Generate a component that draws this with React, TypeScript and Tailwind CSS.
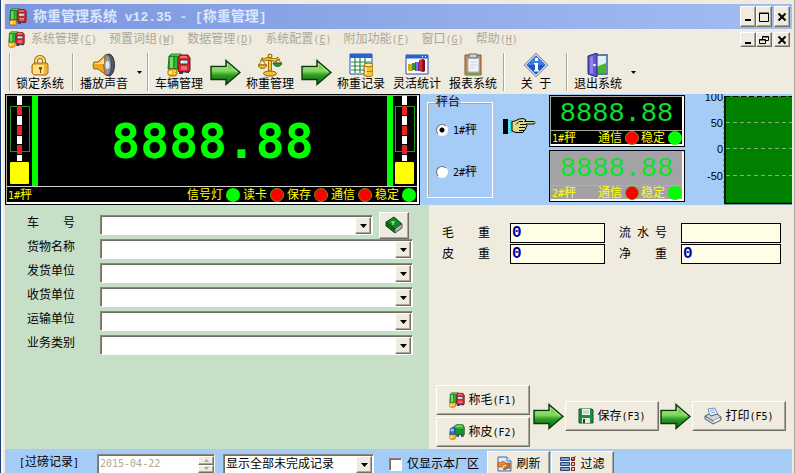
import React from "react";

const RAISED =
  "border border-t-white border-l-white border-r-[#716f64] border-b-[#716f64] shadow-[inset_-1px_-1px_0_#aca899] bg-[#efebde]";
const SUNKEN =
  "border border-t-[#8a8779] border-l-[#8a8779] border-r-white border-b-white shadow-[inset_1px_1px_0_#716f64] bg-white";

type IconProps = { className?: string };

function Latin({ children }: { children: React.ReactNode }) {
  return <span className="font-['DejaVu_Sans_Mono',monospace] text-[10px]">{children}</span>;
}

function TruckIcon({ className = "size-6" }: IconProps) {
  return (
    <svg viewBox="0 0 24 24" className={className} aria-hidden="true">
      <path d="M4 1h10l-1 3H2z" fill="#8cf06a" stroke="#14541a" strokeWidth=".8" />
      <path d="M2 3h11v13H1z" fill="#1f9e2c" stroke="#0d5a18" strokeWidth=".8" />
      <path d="M4.500 4v11" stroke="#6fe05c" strokeWidth="3" />
      <path d="M9 4v11" stroke="#35b83a" strokeWidth="2" />
      <path d="M11 5 13 2h8l2 3v12l-1 2H12l-1-2z" fill="#d62630" stroke="#7c0f18" />
      <path d="M13 4h7" stroke="#ff8a80" strokeWidth="1.500" />
      <path d="M13 7h8v4h-8z" fill="#c9def0" stroke="#4b1720" strokeWidth=".8" />
      <path d="M14 8h3l-2 2h-1z" fill="#fff" />
      <path d="M14 14h6M14 16h6" stroke="#ffb3a0" />
      <path d="M12 18h4v3h-4zM19 18h3v2h-3z" fill="#243a73" />
      <path d="M1 17.500 3 16h5l2 1.500v4L8 23H3l-2-1.500z" fill="#f3b31f" stroke="#a15d08" strokeWidth=".9" />
      <path d="M2 18.500h2.500v2H2zM6 18h3M6 20.500h2" fill="#fff0a0" stroke="#fff0a0" strokeWidth=".8" />
    </svg>
  );
}

function EmptyTruckIcon({ className = "size-6" }: IconProps) {
  return (
    <svg viewBox="0 0 24 24" className={className} aria-hidden="true">
      <path d="M6 5 11 1h10l2 4v11H8z" fill="#1b9430" stroke="#0c5417" />
      <path d="m8 5 4-3h8l1 3z" fill="#6ddd5c" />
      <path d="M11 6h11" stroke="#47bd48" strokeWidth="1.500" />
      <path d="m2 7 5-2 2 3v8H1z" fill="#2d6bd6" stroke="#123a8c" />
      <path d="m3 8 4-1v4H2z" fill="#a9d2fa" />
      <path d="M11 16h4v3h-4zM18 16h4v3h-4z" fill="#173a86" />
      <path d="M1 17.500 3 16h5l2 1.500v4L8 23H3l-2-1.500z" fill="#f3b31f" stroke="#a15d08" strokeWidth=".9" />
      <path d="M2 18.500h2.500v2H2zM6 18h3" fill="#fff0a0" stroke="#fff0a0" strokeWidth=".8" />
    </svg>
  );
}

function LockIcon() {
  return (
    <svg viewBox="0 0 24 24" className="size-6" aria-hidden="true">
      <path d="M8 12V8a4 4 0 0 1 8 0v4" fill="none" stroke="#9a6a10" strokeWidth="4" />
      <path d="M8 12V8a4 4 0 0 1 8 0v4" fill="none" stroke="#f8dc7a" strokeWidth="2.2" />
      <path d="M4 12 6 10h13l1 2v8l-2 2H6l-2-2z" fill="#edb53a" stroke="#a56c10" />
      <path d="M5 12h11v9H6l-1-1z" fill="#fbe08b" />
      <path d="M11 14h3v2l-1 1v3h-1v-3l-1-1z" fill="#7c4f0c" />
    </svg>
  );
}

function SpeakerIcon() {
  return (
    <svg viewBox="0 0 24 24" className="size-6" aria-hidden="true">
      <ellipse cx="17" cy="12" rx="5.5" ry="11" fill="#535861" stroke="#30343b" />
      <ellipse cx="15" cy="12" rx="4.5" ry="10.5" fill="#8e959f" stroke="#3e424a" />
      <ellipse cx="15.500" cy="12" rx="2" ry="4" fill="#dfe5ec" />
      <path d="M2 9h4l8-7.500C11 7 11 17 14 22L6 16H2L1 12.500z" fill="#f2a81e" stroke="#9d620d" />
      <path d="M3 10h4l5-5v6H3z" fill="#ffe082" />
    </svg>
  );
}

function ScaleIcon() {
  return (
    <svg viewBox="0 0 24 24" className="size-6" aria-hidden="true">
      <path d="M12 3v16" stroke="#8d5c06" strokeWidth="4" />
      <path d="M12 3v16" stroke="#f6c436" strokeWidth="2.4" />
      <path d="M3 6c4 2 5-1 9 0s6 2 9-1" fill="none" stroke="#8d5c06" strokeWidth="3.4" />
      <path d="M3 6c4 2 5-1 9 0s6 2 9-1" fill="none" stroke="#f6c436" strokeWidth="1.8" />
      <path d="M4 6 1 12h7zM20 6l-3 5h7z" fill="none" stroke="#a8740c" />
      <path d="M0 12h9c-1 4.500-8 4.500-9 0z" fill="#f5c131" stroke="#8d5c06" />
      <path d="M15 10h9c-1 4.500-8 4.500-9 0z" fill="#2f9e2f" stroke="#125c14" />
      <circle cx="12" cy="3" r="2" fill="#ffdc5c" stroke="#8d5c06" />
      <ellipse cx="12" cy="20.500" rx="6.500" ry="2.500" fill="#f5c131" stroke="#8d5c06" />
    </svg>
  );
}

function RecordIcon() {
  return (
    <svg viewBox="0 0 24 24" className="size-6" aria-hidden="true">
      <path d="M1 1h22v20H1z" fill="#fff" stroke="#1d53b4" />
      <path d="M1 1h22v4H1z" fill="#2563d4" />
      <path d="M2 9h20M2 13h20M2 17h20M6 5v15M11 5v15M16 5v15" stroke="#1f8c3b" strokeWidth="1.2" />
      <path d="M15 12v10c0 2 9 2 9 0V12z" fill="#f5c33a" stroke="#9b6c0a" />
      <path d="M15 17c0 2 9 2 9 0" fill="none" stroke="#9b6c0a" />
      <ellipse cx="19.500" cy="12" rx="4.500" ry="1.800" fill="#ffe896" stroke="#9b6c0a" />
      <path d="M17 14v7" stroke="#fff2ba" strokeWidth="1.500" />
    </svg>
  );
}

function ChartIcon() {
  return (
    <svg viewBox="0 0 24 24" className="size-6" aria-hidden="true">
      <path d="M1 2h22v19H1z" fill="#fff" stroke="#1d53b4" />
      <path d="M1 2h22v3.500H1z" fill="#2563d4" />
      <path d="M17 3.500h1M20 3.500h1" stroke="#fff" />
      <path d="M3 11h5v7H3z" fill="#d8a714" />
      <path d="M7 10h4v7H7z" fill="#279a3a" />
      <path d="M10 9h5v9h-5z" fill="#5638ac" />
      <path d="M11 9h2v9h-2z" fill="#8468dc" />
      <path d="m14 7 4-1 2 1v11l-2 1-4-1z" fill="#d3232a" />
      <path d="M17.500 6 20 7v11l-2.500 1z" fill="#7e0e16" />
    </svg>
  );
}

function ReportIcon() {
  return (
    <svg viewBox="0 0 24 24" className="size-6" aria-hidden="true">
      <path d="M4 2h16v20H4z" fill="#c18a5c" stroke="#875632" />
      <path d="M7 5h11v14H7z" fill="#f2f4f7" stroke="#a9adb5" />
      <path d="M9 9h7M9 12h7M9 15h5" stroke="#cbd0d8" />
      <path d="M8 1h8v4H8z" fill="#c9ced6" stroke="#696e77" />
      <path d="M4 20h17v2H4z" fill="#69a84a" />
    </svg>
  );
}

function AboutIcon() {
  return (
    <svg viewBox="0 0 24 24" className="size-6" aria-hidden="true">
      <path d="M12 0 24 12 12 24 0 12z" fill="#c3d1e6" stroke="#8292ab" />
      <path d="m12 2.500 9.500 9.500-9.500 9.500L2.500 12z" fill="#1b56c4" />
      <path d="m12 2.500 9.500 9.500h-19z" fill="#3e7ee2" />
      <path d="M11 5h3v3h-3zM10 10h4v7h1v1.500h-5V17h1v-5.500h-1z" fill="#fff" />
    </svg>
  );
}

function ExitIcon() {
  return (
    <svg viewBox="0 0 24 24" className="size-6" aria-hidden="true">
      <path d="M10 2h11v19H10z" fill="#d9f1fb" stroke="#3d4f8c" strokeWidth="1.400" />
      <path d="M11 14c4-3 6-2 9-4v10h-9z" fill="#45b82c" />
      <path d="m2 3 9-3v24l-9-3z" fill="#5f58cf" stroke="#2a2580" />
      <path d="m4 4 3-1v18l-3-1z" fill="#8a84ec" />
      <circle cx="8.500" cy="12" r="1.300" fill="#fff" />
    </svg>
  );
}

function FlowArrow({ id }: { id: string }) {
  return (
    <svg viewBox="0 0 31 27" className="h-[27px] w-[31px] shrink-0" aria-hidden="true">
      <defs>
        <linearGradient id={id} x1="0" y1="0" x2="0" y2="1">
          <stop offset="0" stopColor="#4fa83a" />
          <stop offset=".42" stopColor="#86dd62" />
          <stop offset=".62" stopColor="#2c9a24" />
          <stop offset="1" stopColor="#0c6410" />
        </linearGradient>
      </defs>
      <path d="M1 7.500h15V1.500L30 13.500 16 25.500v-5H1z" fill={`url(#${id})`} stroke="#0a3a0c" strokeWidth="1.400" />
      <path d="M2.500 9H17.500V4.500L27 13" fill="none" stroke="#b3ee97" />
    </svg>
  );
}

function BookIcon() {
  return (
    <svg viewBox="0 0 18 18" className="size-[18px]" aria-hidden="true">
      <path d="M1 6 9 1l8 7-7 5z" fill="#128a22" stroke="#07470f" />
      <path d="M1 6v4l9 7v-4z" fill="#0c6a18" stroke="#07470f" />
      <path d="m10 13 7-5v4l-7 5z" fill="#d3d6d3" stroke="#4e544e" />
      <path d="m11 15 5-4" stroke="#858985" />
      <path d="m6 6 4 0M8 5v4" stroke="#b3e8ac" strokeWidth="1.200" />
    </svg>
  );
}

function SaveIcon() {
  return (
    <svg viewBox="0 0 16 16" className="size-4" aria-hidden="true">
      <path d="M1 1h13l1 1v13H1z" fill="#1d8b3d" stroke="#0c5a22" />
      <path d="M4 1h8v6H4z" fill="#f3f7f3" />
      <path d="M5 3h6M5 5h6" stroke="#9dbba4" />
      <path d="M4 10h8v5H4z" fill="#e2e8e3" />
      <path d="M5 11h2v4H5z" fill="#1a4327" />
    </svg>
  );
}

function PrinterIcon() {
  return (
    <svg viewBox="0 0 18 18" className="size-[18px]" aria-hidden="true">
      <path d="m4 2 7-1 3 7-8 2z" fill="#e7f1fd" stroke="#6f94cf" />
      <path d="m6 4 4-1M7 6l4-1" stroke="#7fa9e4" />
      <path d="m1 9 4-2 2 2 6-2 4 3v3l-8 4-8-5z" fill="#cfd3d9" stroke="#5b6069" />
      <path d="m1 9 8 5 8-4" fill="none" stroke="#5b6069" />
      <path d="m9 14 6-3 1 1-5 3z" fill="#fff" />
    </svg>
  );
}

function RefreshIcon() {
  return (
    <svg viewBox="0 0 16 16" className="size-4" aria-hidden="true">
      <path d="M2 1h9l4 4v10H2z" fill="#dbe9fb" stroke="#45689f" />
      <path d="M11 1v4h4" fill="#fff" stroke="#45689f" />
      <path d="M2 11V6l2 1c2-2.500 5-1.500 6 0L8 9.500C6.500 8.500 6 9 5.500 9.500L7 11z" fill="#ee8b20" stroke="#994706" strokeWidth=".6" />
      <path d="M14 7v5.500L12 12c-2 2-4 2-5 1l2-2.500c1 .5 1.500 0 2-1L9.500 7.500z" fill="#d86c14" stroke="#994706" strokeWidth=".6" />
    </svg>
  );
}

function FilterIcon() {
  return (
    <svg viewBox="0 0 16 16" className="size-4" aria-hidden="true">
      <path d="M.5 1.500h9v3h-9zM.5 6.500h9v3h-9zM.5 11.500h9v3h-9z" fill="#7ba0dc" stroke="#2b4272" />
      <path d="M11.500 1.500h3v3h-3zM11.500 6.500h3v3h-3zM11.500 11.500h3v3h-3z" fill="#f6d4d0" stroke="#701a1a" />
      <path d="m12 3 1 1 2.500-4" fill="none" stroke="#c22020" />
    </svg>
  );
}

function HandIcon() {
  return (
    <svg viewBox="0 0 33 17" className="h-[17px] w-[33px] shrink-0" aria-hidden="true">
      <path d="M0 1h5v15H0z" fill="#000" />
      <path d="M5 2h4v13H5z" fill="#38d3e8" />
      <path d="M6 3v11" stroke="#eaffff" strokeDasharray="1 1" />
      <path
        d="M9 3.500 12 3l4-2 4-.5 3 1.500-1.500 1.500H31l1 1-1 1.500h-8l1 1.500-1 2-.5 2-1.500 1-1 2H13l-4-1.500z"
        fill="#dcdc86"
        stroke="#000"
      />
      <path d="M20 3.500h-4l-3 3M17 6.500h6M16 9.500h6M16 12.500h5" fill="none" stroke="#000" />
    </svg>
  );
}

const menus: [string, string][] = [
  ["系统管理", "C"],
  ["预置词组", "W"],
  ["数据管理", "D"],
  ["系统配置", "E"],
  ["附加功能", "F"],
  ["窗口", "G"],
  ["帮助", "H"],
];

function CaptionButtons({ child = false }: { child?: boolean }) {
  const size = child ? "h-[15px]" : "h-[21px]";
  const base = `${RAISED} ${size} w-4 flex items-center justify-center`;
  return (
    <div className="flex">
      <button className={base} aria-label="最小化">
        <svg viewBox="0 0 10 10" className="size-[10px]">
          <path d="M2 8h6" stroke="#000" strokeWidth="2" />
        </svg>
      </button>
      <button className={base} aria-label="还原">
        <svg viewBox="0 0 10 10" className="size-[10px]" fill="none" stroke="#000">
          {child ? (
            <path d="M3.500 4V1.500h6v4H7M3 2h7M.5 4.500h6v4h-6zM0 5h7" />
          ) : (
            <path d="M.5 1.500h9v8h-9zM0 1h10" />
          )}
        </svg>
      </button>
      <button className={`${base} ml-[2px]`} aria-label="关闭">
        <svg viewBox="0 0 10 10" className="size-[10px]">
          <path d="m1.500 1.500 7 7m0-7-7 7" stroke="#000" strokeWidth="2" />
        </svg>
      </button>
    </div>
  );
}

function ToolButton({ icon, label }: { icon: React.ReactNode; label: string }) {
  return (
    <button className="flex w-14 shrink-0 flex-col items-center leading-[14px] whitespace-pre">
      {icon}
      <span>{label}</span>
    </button>
  );
}

function Separator() {
  return <div className="h-[38px] w-[2px] shrink-0 border-l border-r border-l-[#aca899] border-r-white" />;
}

function DropArrow() {
  return (
    <button className="flex w-[15px] shrink-0 justify-center" aria-label="更多">
      <svg viewBox="0 0 5 3" className="h-[3px] w-[5px]">
        <path d="M0 0h5L2.500 3z" />
      </svg>
    </button>
  );
}

function Gauge() {
  return (
    <svg viewBox="0 0 20 90" className="h-[90px] w-5 shrink-0" aria-hidden="true">
      <rect x=".5" y="10.500" width="19" height="45" fill="none" stroke="#1f9a1f" />
      <path d="M7 0h5v65H7z" fill="#000" />
      <path d="M7 0h5v9H7zM7 20h5v9H7zM7 40h5v8H7zM7 59h5v6H7z" fill="#fff" />
      <path d="M7 10h5v9H7zM7 30h5v9H7zM7 49h5v9H7z" fill="#e82424" />
      <rect y="66" width="19" height="22" rx="1" fill="#ff0" />
    </svg>
  );
}

function Lamp({ label, on = false }: { label: string; on?: boolean }) {
  return (
    <span className="flex items-center gap-[3px]">
      {label}
      <span
        className={`size-[14px] shrink-0 rounded-full ${on ? "bg-[#0f0]" : "border border-[#7a8a1a] bg-[#f00]"}`}
      />
    </span>
  );
}

function MiniDisplay({ name, active }: { name: string; active: boolean }) {
  return (
    <div className="border border-black">
      <div
        className={`flex h-[50px] flex-col border-t border-l border-r-2 border-b-2 border-t-[#aca899] border-l-[#aca899] border-r-white border-b-white ${active ? "bg-black" : "bg-[#a5a2a5]"}`}
      >
        <div className="flex h-[33px] items-end justify-center font-['Liberation_Mono',monospace] text-[27px] leading-8 text-[#0be02a]">
          8888.88
        </div>
        <div
          className={`flex h-[14px] items-center gap-[2px] border-t pl-px leading-none text-[#ff0] ${active ? "border-[#aca899]" : "border-[#b4b1a8]"}`}
        >
          <span className="mr-auto">
            <Latin>{name}</Latin>秤
          </span>
          <Lamp label="通信" />
          <Lamp label="稳定" on />
        </div>
      </div>
    </div>
  );
}

function Combo({ label, value = "", className = "" }: { label: string; value?: string; className?: string }) {
  return (
    <span className={`relative flex h-5 ${className}`}>
      <select
        id={label}
        aria-label={label}
        defaultValue={value}
        className={`${SUNKEN} h-full w-full appearance-none pl-[2px] text-xs outline-none`}
      >
        <option value={value}>{value}</option>
      </select>
      <span className={`${RAISED} pointer-events-none absolute top-[2px] right-[2px] bottom-px flex w-4 items-center justify-center`}>
        <svg viewBox="0 0 7 4" className="h-1 w-[7px]">
          <path d="M0 0h7L3.500 4z" />
        </svg>
      </span>
    </span>
  );
}

function FormLabel({ text }: { text: string }) {
  return (
    <label htmlFor={text} className="w-12 shrink-0 leading-4 [text-align-last:justify]">
      {text}
    </label>
  );
}

function Reading({ text, value }: { text: string; value: string }) {
  return (
    <>
      <FormLabel text={text} />
      <input
        id={text}
        defaultValue={value}
        className="h-5 w-full min-w-0 border border-black bg-[#ffffe7] px-px font-['Liberation_Mono',monospace] text-base leading-none font-bold text-[#0000a8] outline-none"
      />
    </>
  );
}

function ActionButton({ icon, text, hotkey }: { icon: React.ReactNode; text: string; hotkey: string }) {
  return (
    <button className={`${RAISED} flex h-[30px] w-[94px] shrink-0 items-center justify-center gap-[3px]`}>
      {icon}
      <span>
        {text}
        <Latin>({hotkey})</Latin>
      </span>
    </button>
  );
}

function WeightChart() {
  const ticks = [
    { y: 3, label: "100" },
    { y: 29, label: "50" },
    { y: 55, label: "0" },
    { y: 82, label: "-50" },
  ];
  return (
    <svg viewBox="0 0 92 111" className="h-[111px] w-[92px] shrink-0" role="img" aria-label="重量曲线">
      <rect x="24" y="2" width="68" height="107" fill="#008200" />
      {ticks.map((t) => (
        <g key={t.label}>
          <path d={`M26 ${t.y - 0.5}H92`} stroke="#7fae7f" strokeDasharray="4 3" />
          <text x="23" y={t.y + 4} textAnchor="end" fontSize="11" className="font-['Liberation_Sans',sans-serif]">
            {t.label}
          </text>
        </g>
      ))}
      <path d="M23 8h2M23 13h2M23 18h2M23 23h2M23 34h2M23 39h2M23 44h2M23 49h2M23 60h2M23 66h2M23 71h2M23 77h2M23 88h2M23 93h2M23 98h2M23 103h2" stroke="#555" />
      <path d="M25 2v107.500H92" fill="none" stroke="#000" strokeWidth="1.500" />
      <path d="M25 2.500H92" stroke="#000" strokeDasharray="5 3" />
    </svg>
  );
}

const cargoFields = ["货物名称", "发货单位", "收货单位", "运输单位", "业务类别"];

export default function App() {
  return (
    <div className="flex h-screen overflow-hidden border-l border-[#1c3f7c] bg-[#efebde] font-['Liberation_Sans','Noto_Sans_CJK_SC',sans-serif] text-xs text-black">
      <div className="flex min-w-0 flex-1 flex-col border-r border-l-2 border-r-[#aca899] border-l-[#fbf7ec] pt-1 pr-[2px] pl-[2px]">
        <header className="flex h-[25px] shrink-0 items-center gap-[6px] bg-linear-to-r from-[#7b96df] to-[#a3bdf2] pr-[2px] pl-1">
          <TruckIcon className="size-[18px]" />
          <h1 className="flex-1 text-sm font-bold text-[#dbe6fb] whitespace-pre">
            称重管理系统
            <span className="font-['Liberation_Mono',monospace] text-[13px]"> v12.35 - [</span>
            称重管理
            <span className="font-['Liberation_Mono',monospace] text-[13px]">]</span>
          </h1>
          <CaptionButtons />
        </header>

        <nav className="flex h-[21px] shrink-0 items-center gap-3 pr-[2px] pl-[3px] text-[#aca899]">
          <TruckIcon className="-mr-[6px] size-[17px] shrink-0" />
          {menus.map(([name, key]) => (
            <button key={name} className="shrink-0 leading-4">
              {name}
              <Latin>
                (<u>{key}</u>)
              </Latin>
            </button>
          ))}
          <div className="ml-auto">
            <CaptionButtons child />
          </div>
        </nav>

        <div className="flex h-11 shrink-0 items-center pl-1">
          <Separator />
          <span className="w-px" />
          <ToolButton icon={<LockIcon />} label="锁定系统" />
          <span className="w-1" />
          <Separator />
          <span className="w-[2px]" />
          <ToolButton icon={<SpeakerIcon />} label="播放声音" />
          <DropArrow />
          <Separator />
          <span className="w-[2px]" />
          <ToolButton icon={<TruckIcon />} label="车辆管理" />
          <span className="w-[3px]" />
          <FlowArrow id="flow-a" />
          <span className="w-px" />
          <ToolButton icon={<ScaleIcon />} label="称重管理" />
          <span className="w-[3px]" />
          <FlowArrow id="flow-b" />
          <span className="w-px" />
          <ToolButton icon={<RecordIcon />} label="称重记录" />
          <ToolButton icon={<ChartIcon />} label="灵活统计" />
          <ToolButton icon={<ReportIcon />} label="报表系统" />
          <span className="w-[2px]" />
          <Separator />
          <span className="w-[3px]" />
          <ToolButton icon={<AboutIcon />} label="关  于" />
          <span className="w-[2px]" />
          <Separator />
          <span className="w-[2px]" />
          <ToolButton icon={<ExitIcon />} label="退出系统" />
          <DropArrow />
        </div>

        <section className="flex h-[111px] shrink-0 bg-[#a5cbf7]">
          <div className="min-w-0 flex-1 border border-black">
            <div className="flex h-full flex-col border-t border-l border-r-2 border-b-2 border-t-[#aca899] border-l-[#aca899] border-r-white border-b-white bg-black">
              <div className="flex flex-1 items-center gap-[2px] pr-[2px] pl-[3px]">
                <Gauge />
                <div className="h-[90px] w-[6px] bg-[#0f0]" />
                <div className="flex-1 text-center font-['DejaVu_Sans_Mono',monospace] text-5xl leading-none font-bold text-[#0f0]">
                  8888.88
                </div>
                <div className="h-[90px] w-[6px] bg-[#0f0]" />
                <Gauge />
              </div>
              <div className="flex h-4 shrink-0 items-center gap-[3px] border-t border-[#d6d3ce] pr-px pl-px leading-none text-[#ff0]">
                <span className="mr-auto">
                  <Latin>1#</Latin>秤
                </span>
                <Lamp label="信号灯" on />
                <Lamp label="读卡" />
                <Lamp label="保存" />
                <Lamp label="通信" />
                <Lamp label="稳定" on />
              </div>
            </div>
          </div>

          <div className="flex w-[372px] shrink-0 items-start overflow-hidden pl-[7px]">
            <fieldset className="mt-px h-[103px] w-[66px] shrink-0 border border-white pl-2 shadow-[inset_1px_1px_0_#aca899]">
              <legend className="-ml-[1px] px-px leading-[14px]">秤台</legend>
              {["1#", "2#"].map((n, i) => (
                <label key={n} className="flex h-[42px] items-center gap-[5px]">
                  <input
                    type="radio"
                    name="scale"
                    defaultChecked={i === 0}
                    className="size-3 appearance-none rounded-full border border-t-[#716f64] border-r-white border-b-white border-l-[#716f64] bg-white checked:bg-[radial-gradient(circle,#000_2px,#fff_3px)]"
                  />
                  <span className="whitespace-nowrap">
                    <Latin>{n}</Latin>秤
                  </span>
                </label>
              ))}
            </fieldset>
            <div className="mt-6 ml-[10px] w-[33px] shrink-0">
              <HandIcon />
            </div>
            <div className="mt-px ml-[13px] flex w-[136px] shrink-0 flex-col gap-[3px]">
              <MiniDisplay name="1#" active />
              <MiniDisplay name="2#" active={false} />
            </div>
            <div className="ml-auto">
              <WeightChart />
            </div>
          </div>
        </section>

        <main className="flex min-h-0 flex-1">
          <form className="flex min-w-0 flex-1 flex-col gap-1 bg-[#c6dfc6] pt-[7px] pr-4 pl-[22px]">
            <div className="flex h-[26px] items-center gap-[6px]">
              <div className="flex w-[67px] shrink-0 pb-1">
                <FormLabel text="车 号" />
              </div>
              <Combo label="车 号" className="flex-1" />
              <button type="button" aria-label="车号簿" className={`${RAISED} mr-1 flex h-[27px] w-[30px] items-center justify-center`}>
                <BookIcon />
              </button>
            </div>
            {cargoFields.map((name) => (
              <div key={name} className="-mt-[3px] mb-[3px] flex h-5 items-center">
                <div className="flex w-[73px] shrink-0 pb-1">
                  <FormLabel text={name} />
                </div>
                <Combo label={name} className="flex-1" />
              </div>
            ))}
          </form>

          <div className="flex w-[363px] shrink-0 flex-col justify-between pr-[5px] pb-[2px] pl-[7px]">
            <div className="grid grid-cols-[54px_95px_48px_100px] items-center gap-x-[14px] gap-y-px pt-[18px] pl-[6px]">
              <Reading text="毛 重" value="0" />
              <Reading text="流 水 号" value="" />
              <Reading text="皮 重" value="0" />
              <Reading text="净 重" value="0" />
            </div>
            <div className="flex items-center gap-px">
              <div className="mr-[2px] flex flex-col gap-[2px]">
                <ActionButton icon={<TruckIcon className="size-4" />} text="称毛" hotkey="F1" />
                <ActionButton icon={<EmptyTruckIcon className="size-4" />} text="称皮" hotkey="F2" />
              </div>
              <FlowArrow id="flow-c" />
              <ActionButton icon={<SaveIcon />} text="保存" hotkey="F3" />
              <FlowArrow id="flow-d" />
              <ActionButton icon={<PrinterIcon />} text="打印" hotkey="F5" />
            </div>
          </div>
        </main>

        <footer className="flex h-6 shrink-0 items-start overflow-hidden bg-[#a5cbf7] pl-[14px]">
          <span className="w-[78px] shrink-0 pt-[5px] leading-4">
            <Latin>[</Latin>过磅记录<Latin>]</Latin>
          </span>
          <div className={`${SUNKEN} mt-[5px] flex h-5 w-[118px] shrink-0`}>
            <input
              aria-label="日期"
              disabled
              defaultValue="2015-04-22"
              className="w-0 flex-1 bg-transparent pl-[2px] font-['DejaVu_Sans_Mono',monospace] text-[10px] text-[#aca899]"
            />
            <div className="mt-px flex w-4 flex-col">
              <button aria-label="增加" className={`${RAISED} flex h-[9px] items-center justify-center`}>
                <svg viewBox="0 0 5 3" className="h-[3px] w-[5px]">
                  <path d="M0 3h5L2.500 0z" fill="#aca899" />
                </svg>
              </button>
              <button aria-label="减少" className={`${RAISED} flex h-[9px] items-center justify-center`}>
                <svg viewBox="0 0 5 3" className="h-[3px] w-[5px]">
                  <path d="M0 0h5L2.500 3z" fill="#aca899" />
                </svg>
              </button>
            </div>
          </div>
          <Combo label="记录范围" value="显示全部未完成记录" className="mt-[5px] ml-2 w-[151px] shrink-0" />
          <label className="mt-[7px] ml-[15px] flex w-[98px] shrink-0 items-center gap-[5px] leading-4">
            <input type="checkbox" className={`${SUNKEN} size-[13px] appearance-none`} />
            仅显示本厂区
          </label>
          <button className={`${RAISED} mt-[2px] flex h-[26px] w-[63px] shrink-0 items-center justify-center gap-1`}>
            <RefreshIcon />
            刷新
          </button>
          <button className={`${RAISED} mt-[2px] ml-px flex h-[26px] w-[63px] shrink-0 items-center justify-center gap-1`}>
            <FilterIcon />
            过滤
          </button>
        </footer>
      </div>
    </div>
  );
}
